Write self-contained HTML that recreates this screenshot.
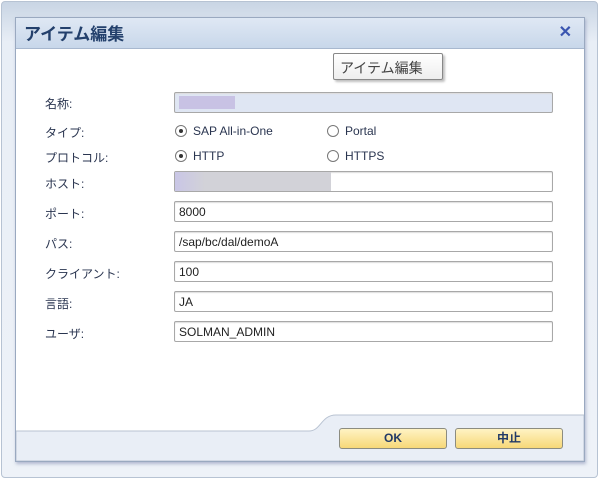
<!DOCTYPE html>
<html><head><meta charset="utf-8"><style>
*{margin:0;padding:0;box-sizing:border-box}
body{width:600px;height:480px;overflow:hidden;background:#fff;font-family:"Liberation Sans","Noto Sans CJK JP",sans-serif;position:relative}
.outer{position:absolute;left:1px;top:1px;width:597px;height:477px;border:1px solid #b7c3d3;border-radius:4px;background:linear-gradient(#c9d5e4,#e8eef6 40px,#eef2f8)}
.panel{position:absolute;left:15px;top:17px;width:570px;height:445px;border:1px solid #9aa9c0;background:#fff;box-shadow:1px 2px 3px rgba(120,130,170,.5)}
.title{position:absolute;left:0;top:0;width:100%;height:31px;background:linear-gradient(#dfe8f4,#c8d7ea);border-bottom:1px solid #a8b8cf;font-size:17px;font-weight:bold;color:#23406c;padding:2px 0 0 8px}
.x{position:absolute;right:12px;top:4px;color:#3a55b0;font-size:16px;font-weight:bold}
.tip{position:absolute;left:333px;top:53px;width:110px;height:27px;border:1px solid #888;border-radius:2px;background:linear-gradient(#fff,#eee);box-shadow:2px 2px 2px rgba(0,0,0,.25);font-size:14px;color:#444;padding:4px 0 0 6px}
.l{position:absolute;left:45px;font-size:12px;color:#2a3550}
.in{position:absolute;left:174px;width:379px;height:21px;border:1px solid #a8a8a8;border-radius:2px;background:#fff;font-size:12px;color:#222;padding:3px 4px;box-shadow:inset 0 1px 1px #ddd}
.r{position:absolute;font-size:12px;color:#2a3550}
.rb{display:inline-block;width:12px;height:12px;border:1px solid #777;border-radius:50%;vertical-align:-2px;margin-right:6px;position:relative;background:#fff}
.rb.on::after{content:"";position:absolute;left:3px;top:3px;width:4px;height:4px;border-radius:50%;background:#333}
.btn{position:absolute;top:428px;width:108px;height:21px;border:1px solid #8c8c80;border-radius:3px;background:linear-gradient(#fff3c4,#f7d878);font-size:12px;font-weight:bold;color:#223a66;text-align:center;line-height:19px}
</style></head><body>
<div class="outer"></div>
<div class="panel">
<div class="title">アイテム編集<span class="x">✕</span></div>
</div>
<svg style="position:absolute;left:16px;top:400px" width="568" height="61"><path d="M0 31 H293 C305 31 305 15 320 15 H568 V61 H0Z" fill="#e9eef6" stroke="#b9c3d2" stroke-width="1"/></svg>
<div class="tip">アイテム編集</div>
<div class="l" style="top:95px">名称:</div>
<div class="in" style="top:92px;background:#dfe6f3"><span style="display:block;width:56px;height:13px;background:#c8c2e4"></span></div>
<div class="l" style="top:124px">タイプ:</div>
<div class="r" style="left:175px;top:124px"><span class="rb on"></span>SAP All-in-One</div>
<div class="r" style="left:327px;top:124px"><span class="rb"></span>Portal</div>
<div class="l" style="top:149px">プロトコル:</div>
<div class="r" style="left:175px;top:149px"><span class="rb on"></span>HTTP</div>
<div class="r" style="left:327px;top:149px"><span class="rb"></span>HTTPS</div>
<div class="l" style="top:175px">ホスト:</div>
<div class="in" style="top:171px;padding:0"><span style="display:block;width:156px;height:19px;background:linear-gradient(90deg,#c9c6e6,#d2d2d8 30px)"></span></div>
<div class="l" style="top:205px">ポート:</div>
<div class="in" style="top:201px">8000</div>
<div class="l" style="top:235px">パス:</div>
<div class="in" style="top:231px">/sap/bc/dal/demoA</div>
<div class="l" style="top:265px">クライアント:</div>
<div class="in" style="top:261px">100</div>
<div class="l" style="top:295px">言語:</div>
<div class="in" style="top:291px">JA</div>
<div class="l" style="top:325px">ユーザ:</div>
<div class="in" style="top:321px">SOLMAN_ADMIN</div>
<div class="btn" style="left:339px">OK</div>
<div class="btn" style="left:455px">中止</div>
</body></html>
